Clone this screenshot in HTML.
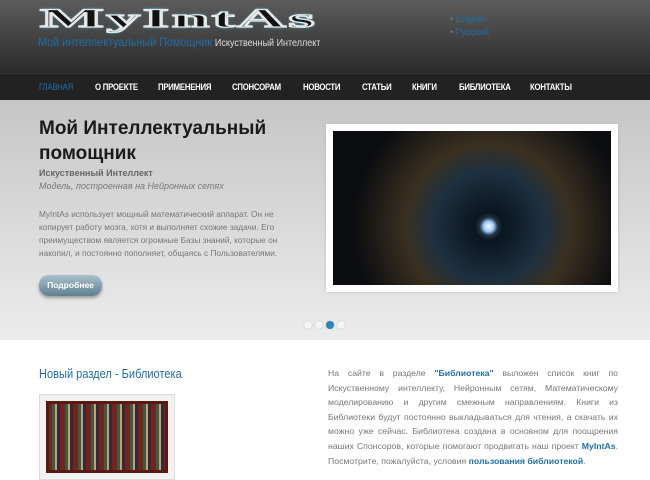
<!DOCTYPE html>
<html><head><meta charset="utf-8"><style>
*{margin:0;padding:0;box-sizing:border-box}
body{width:650px;height:480px;overflow:hidden;font-family:"Liberation Sans","DejaVu Sans",sans-serif;background:#fff;position:relative}
.hdr{position:absolute;left:0;top:0;width:650px;height:73px;background:linear-gradient(#5c5c5c,#2a2a2a)}
.logo{position:absolute;left:40px;top:4px;font-family:"Liberation Serif",serif;font-weight:bold;font-size:26px;letter-spacing:1px;color:#111;-webkit-text-stroke:1.3px #e8e8e8;transform:scaleX(2.6);transform-origin:left;text-shadow:0 0 2px #3cf;line-height:30px}
.sub{position:absolute;left:38px;top:35px;font-size:12px;color:#1f6ea8;white-space:nowrap;transform:scaleX(.9);transform-origin:left}
.sub span{font-size:10px;color:#ddd}
.lang{position:absolute;left:450px;top:13px;font-size:9px;color:#1f6ea8;line-height:13px}
.lang div:before{content:"• ";color:#777}
.nav{position:absolute;left:0;top:73px;width:650px;height:27px;background:#222;border-top:1px solid #333}
.nav span{position:absolute;top:8px;font-size:9.5px;color:#fff;font-weight:bold;letter-spacing:-.3px;transform:scaleX(.82);transform-origin:left}
.hero{position:absolute;left:0;top:100px;width:650px;height:240px;background:linear-gradient(#c6c6c6,#ececec)}
h1{position:absolute;left:39px;top:116px;font-size:19px;line-height:25px;color:#1a1a1a;font-weight:bold}
.b1{position:absolute;left:39px;top:168px;font-size:9px;font-weight:bold;color:#666}
.i1{position:absolute;left:39px;top:181px;font-size:9px;font-style:italic;color:#777}
.p1{position:absolute;left:39px;top:208px;width:258px;font-size:8.3px;line-height:13px;color:#777}
.btn{position:absolute;left:39px;top:275px;width:63px;height:21px;border-radius:10px;background:linear-gradient(#a9c0cc,#5f7f90);color:#fff;font-size:8.5px;font-weight:bold;text-align:center;line-height:21px;box-shadow:0 2px 3px #999}
.img{position:absolute;left:326px;top:124px;width:292px;height:168px;background:#fff;padding:7px;box-shadow:0 0 3px #bbb}
.img div{width:100%;height:100%;background:radial-gradient(circle at 56% 62%,#fff 0,#9cf 5px,#234 9px,#0a1520 14px,#1d3040 30%,#3a3020 45%,#0a0c10 75%)}
.dots{position:absolute;left:304px;top:316px}
.dots i{display:inline-block;width:8px;height:8px;border-radius:50%;background:#f4f4f4;margin-right:3px;box-shadow:0 0 1px #999}
.dots i.a{background:#2a86b8}
h2{position:absolute;left:39px;top:366px;font-size:13px;color:#1f6ea8;font-weight:normal;white-space:nowrap;transform:scaleX(.85);transform-origin:left}
.shelf{position:absolute;left:39px;top:394px;width:136px;height:86px;background:#f2f2f2;border:1px solid #ddd;padding:6px}
.shelf div{height:100%;background:repeating-linear-gradient(90deg,#6a2a1a 0 3px,#3a5a4a 3px 6px,#c9a060 6px 8px,#2a2a4a 8px 11px,#8a1a1a 11px 13px);border:3px solid #5a1a10}
.p2{position:absolute;left:328px;top:366px;width:290px;font-size:8.7px;line-height:14.6px;color:#777;text-align:justify}
.p2 b{color:#1f6ea8}
</style></head><body>
<div class="hdr"></div>
<div class="logo">MyIntAs</div>
<div class="sub">Мой интеллектуальный Помощник <span>Искуственный Интеллект</span></div>
<div class="lang"><div>English</div><div>Русский</div></div>
<div class="nav">
<span style="left:39px;color:#1f6ea8;font-weight:normal">ГЛАВНАЯ</span>
<span style="left:95px">О ПРОЕКТЕ</span>
<span style="left:158px">ПРИМЕНЕНИЯ</span>
<span style="left:232px">СПОНСОРАМ</span>
<span style="left:303px">НОВОСТИ</span>
<span style="left:362px">СТАТЬИ</span>
<span style="left:412px">КНИГИ</span>
<span style="left:459px">БИБЛИОТЕКА</span>
<span style="left:530px">КОНТАКТЫ</span>
</div>
<div class="hero"></div>
<h1>Мой Интеллектуальный<br>помощник</h1>
<div class="b1">Искуственный Интеллект</div>
<div class="i1">Модель, построенная на Нейронных сетях</div>
<div class="p1">MyIntAs использует мощный математический аппарат. Он не копирует работу мозга, хотя и выполняет схожие задачи. Его преимуществом является огромные Базы знаний, которые он накопил, и постоянно пополняет, общаясь с Пользователями.</div>
<div class="btn">Подробнее</div>
<div class="img"><div></div></div>
<div class="dots"><i></i><i></i><i class="a"></i><i></i></div>
<h2>Новый раздел - Библиотека</h2>
<div class="shelf"><div></div></div>
<div class="p2">На сайте в разделе <b>"Библиотека"</b> выложен список книг по Искуственному интеллекту, Нейронным сетям, Математическому моделированию и другим смежным направлениям. Книги из Библиотеки будут постоянно выкладываться для чтения, а скачать их можно уже сейчас. Библиотека создана в основном для поощрения наших Спонсоров, которые помогают продвигать наш проект <b>MyIntAs</b>. Посмотрите, пожалуйста, условия <b>пользования библиотекой</b>.</div>
</body></html>
